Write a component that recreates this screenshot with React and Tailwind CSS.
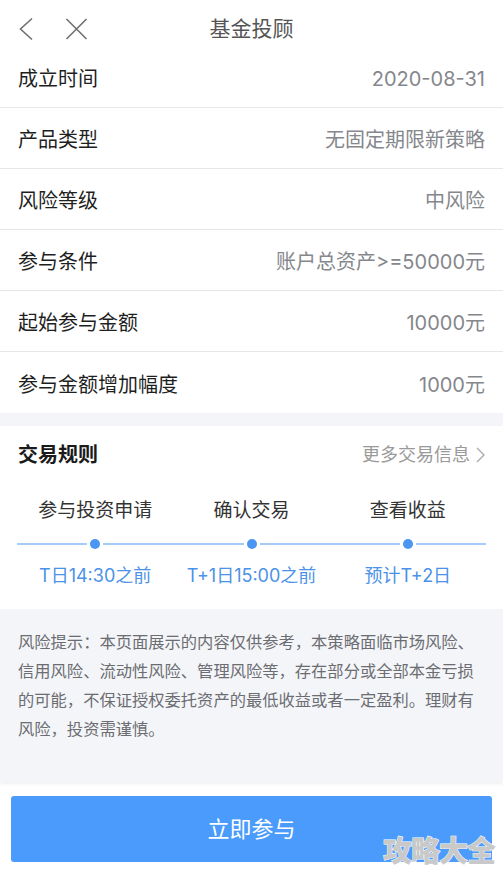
import React from 'react';

const font = { fontFamily: 'Inter, "Noto Sans CJK SC", "Noto Sans", sans-serif' };

const rows = [
  ['成立时间', '2020-08-31'],
  ['产品类型', '无固定期限新策略'],
  ['风险等级', '中风险'],
  ['参与条件', '账户总资产>=50000元'],
  ['起始参与金额', '10000元'],
  ['参与金额增加幅度', '1000元'],
];

const steps = [
  ['参与投资申请', 'T日14:30之前'],
  ['确认交易', 'T+1日15:00之前'],
  ['查看收益', '预计T+2日'],
];

export default function App() {
  return (
    <div className="relative w-[503px] h-[874px] overflow-hidden bg-white" style={font}>
      {/* header */}
      <header className="relative flex h-[47px] items-start pt-[17px]">
        <svg className="ml-[18px]" width="16" height="24" viewBox="0 0 16 24" fill="none">
          <path d="M14 1.5 L2.5 12 L14 22.5" stroke="#707070" strokeWidth="1.6" />
        </svg>
        <svg className="ml-[31px] mt-[1px]" width="23" height="22" viewBox="0 0 23 22" fill="none">
          <path d="M1.5 1 L21.5 21 M21.5 1 L1.5 21" stroke="#707070" strokeWidth="1.6" />
        </svg>
        <div className="absolute left-0 right-0 top-[15px] text-center text-[21px] leading-[28px] text-[#555]">
          基金投顾
        </div>
      </header>

      {/* info rows */}
      <div>
        {rows.map(([k, v], i) => (
          <div
            key={k}
            className={`flex h-[61px] items-center justify-between pl-[18px] pr-[18px] pt-[4px] ${
              i < rows.length - 1 ? 'border-b border-[#e6e7ea]' : ''
            }`}
          >
            <span className="text-[20px] text-[#1f1f1f]">{k}</span>
            <span className="text-[20px] text-[#85878c]">{v}</span>
          </div>
        ))}
      </div>

      <div className="h-[13px] bg-[#f4f5f8]" />

      {/* trading rules */}
      <section className="pb-[21px]">
        <div className="flex items-center justify-between px-[18px] pt-[16px]">
          <span className="text-[20px] font-bold leading-[26px] text-[#1a1a1a]">交易规则</span>
          <span className="flex items-center text-[18px] leading-[26px] text-[#9a9a9a]">
            更多交易信息
            <svg className="ml-[6px]" width="9" height="16" viewBox="0 0 9 16" fill="none">
              <path d="M1 1 L8 8 L1 15" stroke="#a8a8a8" strokeWidth="1.3" />
            </svg>
          </span>
        </div>

        <div className="mx-[17px] mt-[31px] grid grid-cols-3">
          {steps.map(([label, time]) => (
            <div key={label} className="flex flex-col items-center">
              <span className="text-[19px] leading-[24px] text-[#333]">{label}</span>
              <div className="mt-[16px] flex h-[10px] w-full items-center">
                <div className="h-[2px] flex-1 bg-[#a5cbf7]" />
                <div className="mx-[3px] h-[10px] w-[10px] rounded-full bg-[#4b96f3]" />
                <div className="h-[2px] flex-1 bg-[#a5cbf7]" />
              </div>
              <span className="mt-[15px] text-[18px] leading-[24px] text-[#4b92e8]">{time}</span>
            </div>
          ))}
        </div>
      </section>

      {/* risk notice */}
      <div className="h-[173px] bg-[#f4f5f8] pl-[18px] pr-[28px] pt-[19px] shadow-[0_2px_3px_rgba(0,0,0,0.06)]">
        <p className="text-[16.3px] leading-[29px] text-[#6b6d72]">
          风险提示：本页面展示的内容仅供参考，本策略面临市场风险、信用风险、流动性风险、管理风险等，存在部分或全部本金亏损的可能，不保证授权委托资产的最低收益或者一定盈利。理财有风险，投资需谨慎。
        </p>
      </div>

      {/* button */}
      <div className="px-[11px] pt-[14px]">
        <button
          type="button"
          className="flex h-[66px] w-full items-center justify-center rounded-[3px] bg-[#4a9bfb] text-[22px] text-white"
        >
          立即参与
        </button>
      </div>

      {/* watermark */}
      <div
        className="absolute right-[8px] bottom-[6px] text-[29px] font-black leading-[32px] tracking-[-1px] text-[#c9c9c9]"
        style={{ WebkitTextStroke: '1px #ffffff', paintOrder: 'stroke fill' }}
      >
        攻略大全
      </div>
    </div>
  );
}
